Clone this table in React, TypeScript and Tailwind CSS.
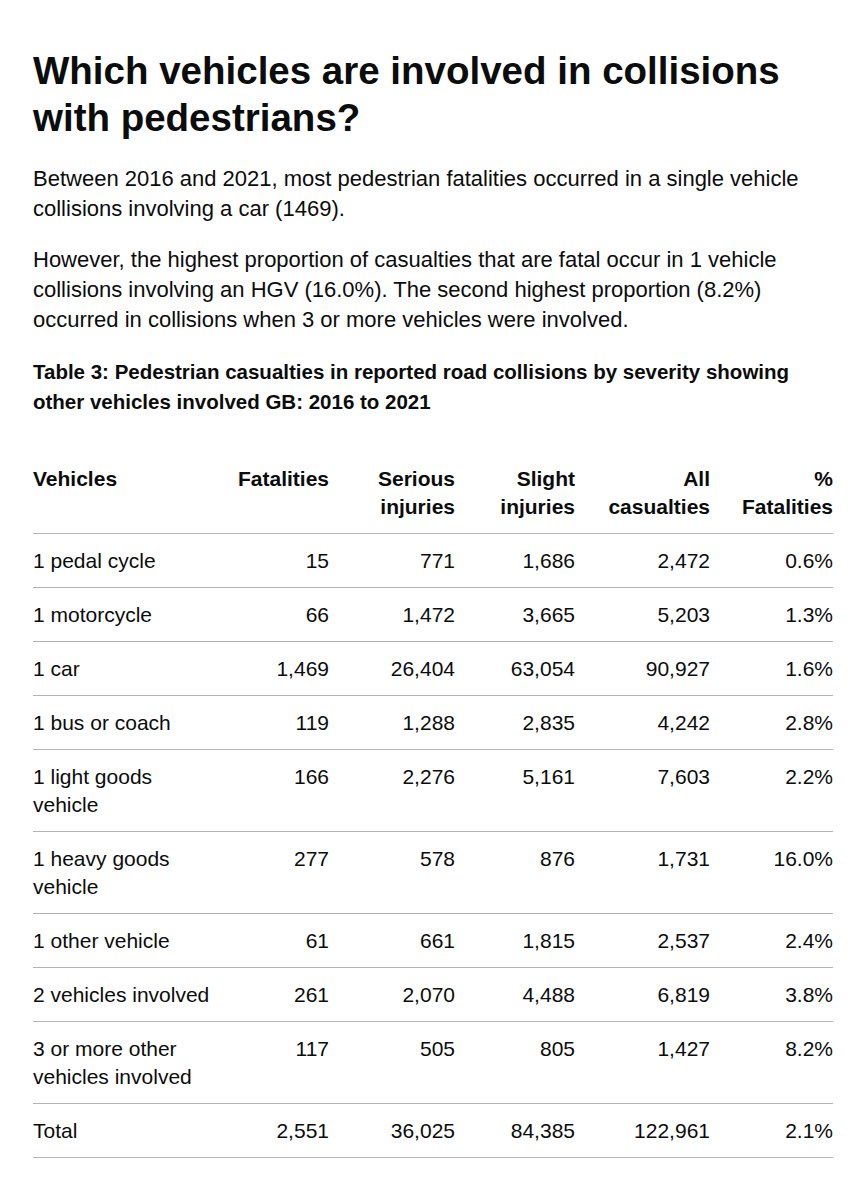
import React from 'react';

type Row = {
  vehicle: string;
  fatalities: string;
  serious: string;
  slight: string;
  all: string;
  pct: string;
};

const rows: Row[] = [
  { vehicle: '1 pedal cycle', fatalities: '15', serious: '771', slight: '1,686', all: '2,472', pct: '0.6%' },
  { vehicle: '1 motorcycle', fatalities: '66', serious: '1,472', slight: '3,665', all: '5,203', pct: '1.3%' },
  { vehicle: '1 car', fatalities: '1,469', serious: '26,404', slight: '63,054', all: '90,927', pct: '1.6%' },
  { vehicle: '1 bus or coach', fatalities: '119', serious: '1,288', slight: '2,835', all: '4,242', pct: '2.8%' },
  { vehicle: '1 light goods vehicle', fatalities: '166', serious: '2,276', slight: '5,161', all: '7,603', pct: '2.2%' },
  { vehicle: '1 heavy goods vehicle', fatalities: '277', serious: '578', slight: '876', all: '1,731', pct: '16.0%' },
  { vehicle: '1 other vehicle', fatalities: '61', serious: '661', slight: '1,815', all: '2,537', pct: '2.4%' },
  { vehicle: '2 vehicles involved', fatalities: '261', serious: '2,070', slight: '4,488', all: '6,819', pct: '3.8%' },
  { vehicle: '3 or more other vehicles involved', fatalities: '117', serious: '505', slight: '805', all: '1,427', pct: '8.2%' },
  { vehicle: 'Total', fatalities: '2,551', serious: '36,025', slight: '84,385', all: '122,961', pct: '2.1%' },
];

// 数値セル（右寄せ）
const cell = 'border-b border-[#b1b4b6] pt-[13px] pb-[12px] pr-5 align-top';
const numCell = `${cell} text-right`;
const lastCell = 'border-b border-[#b1b4b6] pt-[13px] pb-[12px] align-top text-right';

export default function App() {
  return (
    <div
      className="min-h-[1200px] bg-white text-[#0b0c0c] px-[33px] pt-[47px]"
      style={{ fontFamily: '"Liberation Sans", Arial, sans-serif' }}
    >
      <div className="w-[800px]">
        <h1 className="text-[38.5px] leading-[47px] font-bold">
          Which vehicles are involved in collisions with pedestrians?
        </h1>

        <p className="mt-[23px] text-[22px] leading-[30px]">
          Between 2016 and 2021, most pedestrian fatalities occurred in a single vehicle collisions involving a car (1469).
        </p>
        <p className="mt-[21px] text-[22px] leading-[30px]">
          However, the highest proportion of casualties that are fatal occur in 1 vehicle collisions involving an HGV
          (16.0%). The second highest proportion (8.2%) occurred in collisions when 3 or more vehicles were involved.
        </p>

        <table className="mt-[22px] w-[800px] table-fixed border-collapse text-[21px] leading-[28px]">
          <caption className="text-left font-bold text-[20.5px] leading-[30px] mb-[35px]">
            Table 3: Pedestrian casualties in reported road collisions by severity showing other vehicles involved GB:
            2016 to 2021
          </caption>
          <colgroup>
            <col className="w-[203px]" />
            <col className="w-[113px]" />
            <col className="w-[126px]" />
            <col className="w-[120px]" />
            <col className="w-[135px]" />
            <col className="w-[103px]" />
          </colgroup>
          <thead>
            <tr className="font-bold">
              <th className={`${cell} text-left`}>Vehicles</th>
              <th className={numCell}>Fatalities</th>
              <th className={numCell}>Serious injuries</th>
              <th className={numCell}>Slight injuries</th>
              <th className={numCell}>All casualties</th>
              <th className={lastCell}>% Fatalities</th>
            </tr>
          </thead>
          <tbody>
            {rows.map((r) => (
              <tr key={r.vehicle}>
                <td className={`${cell} text-left`}>{r.vehicle}</td>
                <td className={numCell}>{r.fatalities}</td>
                <td className={numCell}>{r.serious}</td>
                <td className={numCell}>{r.slight}</td>
                <td className={numCell}>{r.all}</td>
                <td className={lastCell}>{r.pct}</td>
              </tr>
            ))}
          </tbody>
        </table>
      </div>
    </div>
  );
}
